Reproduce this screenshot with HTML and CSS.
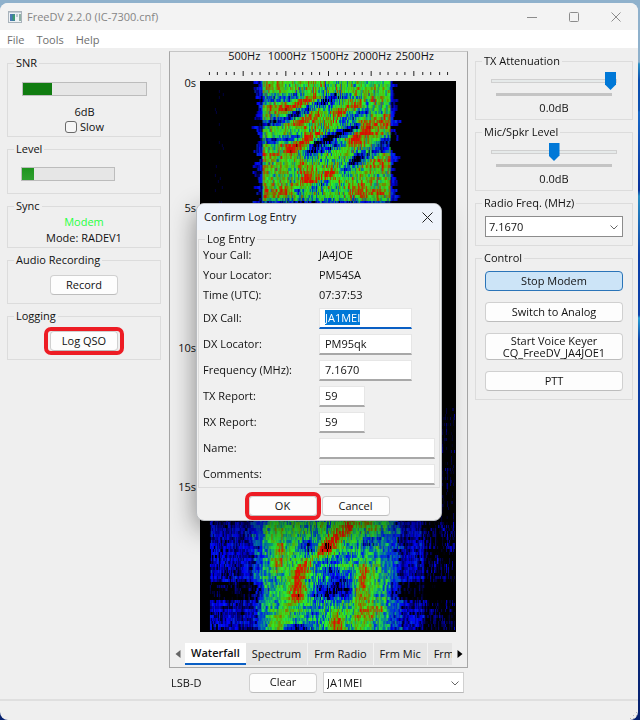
FILE: index.html
```html
<!DOCTYPE html>
<html lang="en">
<head>
<meta charset="utf-8">
<title>FreeDV 2.2.0 (IC-7300.cnf)</title>
<link rel="stylesheet" href="styles.css">
</head>
<body>
<div class="window">
  <header class="titlebar">
    <svg class="app-icon" width="14" height="12" viewBox="0 0 14 12" aria-hidden="true">
      <rect x="0.5" y="0.5" width="13" height="11" fill="#eef2f5" stroke="#a9b3bb"/>
      <rect x="1" y="1" width="12" height="1" fill="#c3ccd6"/>
      <rect x="2" y="3" width="5" height="7" fill="#3f8396"/>
      <rect x="2" y="3" width="2" height="7" fill="#4c78b4"/>
      <rect x="5" y="4" width="2" height="5" fill="#3d9a72"/>
      <rect x="8" y="3" width="2" height="3" fill="#b9c6cf"/>
      <rect x="11" y="3" width="2" height="7" fill="#8fb0a5"/>
    </svg>
    <h1 class="title">FreeDV 2.2.0 (IC-7300.cnf)</h1>
    <div class="caption-buttons">
      <button aria-label="Minimize"><svg width="10" height="10" viewBox="0 0 10 10"><path d="M0 5.5h10" stroke="#8c8c8c"/></svg></button>
      <button aria-label="Maximize"><svg width="10" height="10" viewBox="0 0 10 10"><rect x="0.5" y="0.5" width="9" height="9" rx="1" fill="none" stroke="#8c8c8c"/></svg></button>
      <button aria-label="Close"><svg width="10" height="10" viewBox="0 0 10 10"><path d="M0.5 0.5l9 9M9.5 0.5l-9 9" stroke="#8c8c8c"/></svg></button>
    </div>
  </header>
  <nav class="menubar"><a href="#">File</a><a href="#">Tools</a><a href="#">Help</a></nav>

  <main class="content">
    <section class="side left">
      <fieldset>
        <legend>SNR</legend>
        <div class="snr">
          <div class="meter"><div class="meter-fill" style="width:23.5%"></div></div>
          <div class="line">6dB</div>
          <label class="line check"><input type="checkbox">Slow</label>
        </div>
      </fieldset>
      <fieldset>
        <legend>Level</legend>
        <div class="level">
          <div class="meter short"><div class="meter-fill bright" style="width:13%"></div></div>
        </div>
      </fieldset>
      <fieldset>
        <legend>Sync</legend>
        <div class="sync">
          <div class="line synced">Modem</div>
          <div class="line">Mode: RADEV1</div>
        </div>
      </fieldset>
      <fieldset>
        <legend>Audio Recording</legend>
        <div class="action"><button class="btn">Record</button></div>
      </fieldset>
      <fieldset>
        <legend>Logging</legend>
        <div class="action"><span class="marked"><button class="btn">Log QSO</button></span></div>
      </fieldset>
    </section>

    <section class="center">
      <div class="panel">
        <div class="freq-labels"><span>500Hz</span><span>1000Hz</span><span>1500Hz</span><span>2000Hz</span><span>2500Hz</span></div>
        <svg class="ticks" viewBox="0 0 258 6" preserveAspectRatio="none" aria-hidden="true"></svg>
        <div class="plot">
          <div class="times"><span>0s</span><span>5s</span><span>10s</span><span>15s</span></div>
          <canvas class="waterfall" width="258" height="551"></canvas>
        </div>
        <div class="tabs">
          <button class="arrow" aria-label="Previous tabs"><svg width="6" height="8" viewBox="0 0 6 8"><path d="M5.5 0v8L0.5 4z" fill="#666"/></svg></button>
          <div class="tab-strip">
            <button class="tab active">Waterfall</button><button class="tab">Spectrum</button><button class="tab">Frm Radio</button><button class="tab">Frm Mic</button><button class="tab">Frm Decoder</button>
          </div>
          <button class="arrow" aria-label="Next tabs"><svg width="6" height="8" viewBox="0 0 6 8"><path d="M0.5 0v8L5.5 4z" fill="#000"/></svg></button>
        </div>
      </div>
      <div class="bottom-row">
        <span class="mode">LSB-D</span>
        <button class="btn">Clear</button>
        <span class="combo soft"><select aria-label="Heard station"><option>JA1MEI</option></select>
          <svg width="8" height="5" viewBox="0 0 8 5"><path d="M0.5 0.5L4 4L7.5 0.5" fill="none" stroke="#666"/></svg></span>
      </div>
    </section>

    <section class="side right">
      <fieldset>
        <legend>TX Attenuation</legend>
        <div class="slider">
          <input type="range" min="0" max="100" value="100" aria-label="TX Attenuation">
          <div class="scale"></div>
          <div class="line">0.0dB</div>
        </div>
      </fieldset>
      <fieldset>
        <legend>Mic/Spkr Level</legend>
        <div class="slider">
          <input type="range" min="0" max="100" value="50" aria-label="Mic/Spkr Level">
          <div class="scale"></div>
          <div class="line">0.0dB</div>
        </div>
      </fieldset>
      <fieldset>
        <legend>Radio Freq. (MHz)</legend>
        <div class="radio-freq">
          <span class="combo"><select aria-label="Radio frequency"><option>7.1670</option></select>
            <svg width="8" height="5" viewBox="0 0 8 5"><path d="M0.5 0.5L4 4L7.5 0.5" fill="none" stroke="#666"/></svg></span>
        </div>
      </fieldset>
      <fieldset>
        <legend>Control</legend>
        <div class="control">
          <button class="btn pressed">Stop Modem</button>
          <button class="btn">Switch to Analog</button>
          <button class="btn two-line">Start Voice Keyer<br>CQ_FreeDV_JA4JOE1</button>
          <button class="btn">PTT</button>
        </div>
      </fieldset>
    </section>
  </main>
  <footer class="statusbar">
    <svg width="10" height="10" viewBox="0 0 10 10" aria-hidden="true"><path d="M8 2h1v1h-1zM5 5h1v1h-1zM8 5h1v1h-1zM2 8h1v1h-1zM5 8h1v1h-1zM8 8h1v1h-1z" fill="#b4b4b4"/></svg>
  </footer>
</div>

<form class="dialog" role="dialog" aria-labelledby="dialog-title">
  <header class="dialog-title">
    <h2 id="dialog-title">Confirm Log Entry</h2>
    <button type="button" aria-label="Close"><svg width="11" height="11" viewBox="0 0 11 11"><path d="M0.5 0.5l10 10M10.5 0.5l-10 10" stroke="#222"/></svg></button>
  </header>
  <fieldset>
    <legend>Log Entry</legend>
    <div class="fields">
      <span>Your Call:</span><span>JA4JOE</span>
      <span>Your Locator:</span><span>PM54SA</span>
      <span>Time (UTC):</span><span>07:37:53</span>
      <label for="dx-call">DX Call:</label><input class="medium" id="dx-call" value="JA1MEI">
      <label for="dx-loc">DX Locator:</label><input class="medium" id="dx-loc" value="PM95qk">
      <label for="freq">Frequency (MHz):</label><input class="medium" id="freq" value="7.1670">
      <label for="tx">TX Report:</label><input class="small" id="tx" value="59">
      <label for="rx">RX Report:</label><input class="small" id="rx" value="59">
      <label for="name">Name:</label><input id="name">
      <label for="comments">Comments:</label><input id="comments">
    </div>
  </fieldset>
  <div class="dialog-actions">
    <span class="marked"><button type="button" class="btn">OK</button></span>
    <button type="button" class="btn">Cancel</button>
  </div>
</form>
<script src="waterfall.js"></script>
</body>
</html>
```
FILE: styles.css
```css
* { box-sizing: border-box; }

body {
  margin: 0;
  min-height: 100vh;
  padding: 3px 2px 0 0;
  display: flex;
  position: relative;
  background: linear-gradient(#8fb1cc 0 62px, #2b8fc4 64px, #0a4fb0 80px 110px, #1667c8 112px, #06309a 190px, #2b8fc4 196px, #0b3fa8 255px 315px, #2b9fd4 318px, #0a3fa8 340px, #06216f);
  font: 11px/16px "Open Sans", "Noto Sans", sans-serif;
  color: #111;
}

button, input, select { font: inherit; color: inherit; margin: 0; }
button { padding: 0; border: 0; background: none; }
svg { display: block; }

.window {
  flex: 1;
  min-width: 0;
  display: flex;
  flex-direction: column;
  background: #efefef;
  border-radius: 8px;
  overflow: hidden;
}

.titlebar {
  display: flex;
  align-items: center;
  height: 27px;
  padding: 0 17px 0 8px;
  background: #f3f3f3;
  color: #858585;
}
.title { margin: 0 0 0 5px; font-size: 11px; font-weight: 400; }
.caption-buttons { display: flex; gap: 32px; margin-left: auto; }

.menubar {
  display: flex;
  gap: 12px;
  height: 18px;
  padding: 0 7px;
  background: #fff;
  line-height: 20px;
}
.menubar a { color: #6e6e6e; text-decoration: none; }

.content {
  flex: 1;
  display: grid;
  grid-template-columns: 154px minmax(0, 1fr) 158px;
  column-gap: 7px;
  padding: 0 5px 0 7px;
}

.side { display: flex; flex-direction: column; gap: 4px; }
.left { padding-top: 7px; }
.right { padding-top: 5px; }

fieldset {
  min-width: 0;
  margin: 0;
  padding: 0;
  border: 1px solid #dcdcdc;
}
legend { margin-left: 6px; padding: 0 2px; line-height: 16px; }
.line { text-align: center; line-height: 16px; }

.snr { padding: 11px 13px 1px 14px; }
.level { padding: 10px 13px 12px; }
.sync { padding-bottom: 1px; }
.action { padding: 7px 0 8px; }
.action > * { margin: 0 auto; }
.synced { color: #1fff3f; }

.meter { height: 14px; border: 1px solid #bcbcbc; background: #e6e6e6; }
.meter.short { width: 94px; }
.snr .meter { margin-bottom: 8px; }
.meter-fill { height: 100%; background: #107c10; }
.meter-fill.bright { background: linear-gradient(#1e941e, #2fa02f); }

.check { display: flex; justify-content: center; align-items: center; gap: 3px; margin-top: -1px; }
.check input {
  appearance: none;
  width: 12px;
  height: 12px;
  border: 1px solid #6a6a6a;
  border-radius: 3px;
  background: #f6f6f6;
}

.btn {
  display: block;
  width: 68px;
  height: 20px;
  padding-bottom: 1px;
  border: 1px solid #d0d0d0;
  border-bottom-color: #bdbdbd;
  border-radius: 4px;
  background: #fdfdfd;
  line-height: 16px;
}

.marked { position: relative; display: block; width: 68px; }
.marked::after {
  content: "";
  position: absolute;
  inset: -4px -6px;
  border: 4px solid #ed1c24;
  border-radius: 7px;
  pointer-events: none;
}

.center { display: flex; flex-direction: column; padding: 3px 0 0 1px; min-width: 0; }
.panel { border: 1px solid #a6a6a6; border-top-color: #c6c6c6; }
.freq-labels {
  display: grid;
  grid-template-columns: repeat(5, 1fr);
  margin: -5px 31px 0 53px;
  text-align: center;
  line-height: 17px;
}
.freq-labels span { display: flex; justify-content: center; }
.ticks { display: block; margin: 6px 0 5px 30px; width: calc(100% - 41px); height: 6px; }
.plot { display: grid; grid-template-columns: 26px minmax(0, 1fr); column-gap: 4px; padding-right: 11px; }
.times {
  display: grid;
  grid-template-rows: 125px 140px 139px 1fr;
  margin-top: -6px;
  text-align: right;
}
.waterfall { display: block; width: 100%; height: 551px; background: #000; }

.tabs { display: flex; margin-top: 11px; padding-bottom: 2px; }
.arrow { width: 15px; display: grid; place-items: center; }
.tab-strip { flex: 1; min-width: 0; display: flex; overflow: hidden; }
.tab {
  flex: none;
  height: 22px;
  padding: 0 6px;
  background: #e5e5e5;
  border-right: 1px solid #f3f3f3;
}
.tab.active { background: #fff; border-right: 0; border-bottom: 2px solid #0a5fc4; font-weight: 600; line-height: 18px; }

.bottom-row { display: flex; align-items: center; padding: 4px 4px 5px 0; }
.mode { width: 80px; padding-left: 2px; }
.combo { position: relative; display: block; }
.combo svg { position: absolute; right: 5px; top: 9px; pointer-events: none; }
.combo select {
  display: block;
  appearance: none;
  width: 100%;
  height: 21px;
  padding: 0 3px;
  border: 1px solid #8c8c8c;
  border-radius: 0;
  background: #fff;
}
.combo.soft { flex: 1; margin-left: 6px; }
.combo.soft select { border-color: #d0d0d0; border-bottom-color: #b8b8b8; }

.slider { padding: 3px 15px; }
.slider input {
  appearance: none;
  display: block;
  width: 100%;
  height: 18px;
  background: none;
}
.slider input::-webkit-slider-runnable-track { height: 4px; border: 1px solid #d0d0d0; background: #e6eaea; }
.slider input::-webkit-slider-thumb {
  appearance: none;
  width: 11px;
  height: 18px;
  margin-top: -8px;
  background: #0078d7;
  clip-path: polygon(0 0, 100% 0, 100% 70%, 50% 100%, 0 70%);
}
.scale { height: 3px; margin: 3px 5px 4px; background: #c4c4c4; }

.radio-freq { padding: 5px 9px 8px; }
.control { display: flex; flex-direction: column; gap: 11px; padding: 5px 9px 8px; }
.control .btn { width: 100%; }
.control .two-line { height: 27px; padding: 0; line-height: 12px; }
.control .pressed { border-color: #2a74b8; background: #cce4f7; }

.statusbar { height: 21px; border-top: 2px solid #dfdfdf; display: flex; justify-content: flex-end; align-items: flex-end; }

.dialog {
  position: absolute;
  left: 196px;
  top: 203px;
  width: 246px;
  border: 1px solid #b9bcc0;
  border-radius: 8px;
  background: #f0f0f0;
  box-shadow: 0 8px 26px rgba(0, 0, 0, .45);
}
.dialog-title {
  display: flex;
  justify-content: space-between;
  align-items: center;
  height: 26px;
  padding: 0 8px 0 7px;
  border-radius: 7px 7px 0 0;
  background: #eef3fa;
}
.dialog-title h2 { margin: 0; font-size: 11px; font-weight: 400; }
.dialog fieldset { margin: 1px 1px 0; }
.dialog legend { margin-left: 6px; }
.fields {
  display: grid;
  grid-template-columns: 116px 1fr;
  grid-template-rows: repeat(3, 20px) repeat(7, 26px);
  align-items: center;
  padding: 0 4px;
  margin-top: -2px;
}
.fields input {
  width: 100%;
  height: 21px;
  padding: 0 5px;
  border: 1px solid #e6e6e6;
  border-bottom: 2px solid #a8a8a8;
  background: #fff;
  outline: 0;
}
.fields .medium { width: 93px; }
.fields .small { width: 46px; }
#dx-call { border-bottom-color: #0a5fc4; }
.fields ::selection { background: #0078d7; color: #fff; }
.dialog-actions { display: flex; justify-content: center; gap: 5px; padding: 8px 0 4px; }
.dialog-actions .marked::after { inset: -4px; }
```
FILE: waterfall.js
```js
const svg = document.querySelector(".ticks");
for (let i = 1; i <= 29; i++) {
  const major = i % 5 === 0;
  const r = document.createElementNS("http://www.w3.org/2000/svg", "rect");
  r.setAttribute("x", Math.round(i * 8.6));
  r.setAttribute("y", major ? 1 : 2);
  r.setAttribute("width", 1);
  r.setAttribute("height", major ? 5 : 3);
  r.setAttribute("fill", "#222");
  svg.appendChild(r);
}

// Signal ridges and fades: [x1, y1, x2, y2, radius, gain]
const features = [
  [65,17,98,15,4,-.3],[95,31,135,15,4,-.32],[135,15,160,15,3,-.28],[65,43,98,32,4,-.34],[65,59,98,55,3,-.34],
  [115,62,158,44,4,-.55],[105,72,145,62,4,-.3],[145,37,165,29,4,-.3],[155,77,192,64,4,-.35],[145,87,162,76,4,-.25],
  [98,109,128,99,4,-.3],[65,119,190,119,2,-.35],[120,22,150,24,4,-.12],[180,62,195,55,5,-.3],
  [88,27,115,16,5,.24],[138,30,158,19,5,.24],[65,27,82,25,6,.16],[65,4,80,6,6,.14],[98,40,118,33,5,.18],
  [92,67,118,51,5,.25],[145,67,165,47,6,.22],[165,50,190,38,9,.14],[178,80,190,76,9,.14],[107,87,107,96,8,.16],
  [105,105,132,91,5,.2],[70,114,85,110,5,.18],[155,108,185,112,7,.16],[65,75,90,70,6,.1],
  [152,440,128,464,8,.28],[128,464,102,484,5,.28],[168,440,174,448,8,.16],[98,492,98,513,8,.3],[78,455,78,480,7,.16],
  [165,490,162,520,8,.26],[178,527,160,536,6,.24],[138,535,138,548,7,.26],[96,515,75,548,8,.14],
  [108,464,112,470,8,-.24],[168,460,178,455,7,-.22],[120,510,146,508,9,-.34],[130,488,140,496,8,-.2],[90,546,106,546,5,-.3],
  [112,530,125,535,7,-.1],[118,480,150,474,5,-.1]
];
const stops = [[0,0,0,0],[.12,0,0,0],[.28,0,0,255],[.45,0,110,170],[.58,40,245,45],[.74,100,160,0],[.88,225,15,0],[1.1,200,20,0],[1.16,0,0,0]];

let seed = 7300;
const rnd = () => (seed = (seed * 1664525 + 1013904223) >>> 0) / 4294967296;

function segmentDistance(x, y, f) {
  const dx = f[2] - f[0], dy = f[3] - f[1];
  const t = Math.max(0, Math.min(1, ((x - f[0]) * dx + (y - f[1]) * dy) / (dx * dx + dy * dy || 1)));
  return Math.hypot(x - f[0] - t * dx, y - f[1] - t * dy);
}
function color(v) {
  for (let i = 1; i < stops.length; i++) {
    if (v <= stops[i][0]) {
      const a = stops[i - 1], b = stops[i], t = Math.max(0, (v - a[0]) / (b[0] - a[0]));
      return [1, 2, 3].map(k => a[k] + (b[k] - a[k]) * t);
    }
  }
  return [0, 0, 0];
}

const ctx = document.querySelector(".waterfall").getContext("2d");
let held = new Array(258).fill(0);
for (let y = 0; y < 547; y += 3) {
  const late = y > 325;
  const edge = (rnd() + rnd() - 1) * 6;
  const quiet = y > 500 && y < 519;
  const row = (rnd() - .5) * .06;
  let patch = 0;
  for (let x = 0; x < 257; x++) {
    // Each column partly keeps its level from the row above
    const fresh = (rnd() + rnd()) - 1;
    held[x] = rnd() < .4 ? held[x] : fresh;
    if (x % 7 === 0) patch = (rnd() - .5) * .14;
    const n = held[x];
    let v = 0;
    if (x > 62 && x < 192) {
      v = (late ? .54 : .62) + n * (late ? .22 : .27) + patch + row;
      if (late) v -= .1 * Math.max(0, 1 - Math.min(x - 62, 192 - x) / 14);
    } else if (late && x > 54 + edge && x < 200 + edge) {
      v = .38 + n * .2;
    } else if (late && x > 9) {
      v = (x > 225 ? .12 : .23) + n * .15 + row + patch / 2;
      if (y < 440) v -= .05;
    } else if (!late && x > 57 + edge && x < 197 + edge) {
      v = .24 + n * .14;
    } else if (!late && x > 14 && x < 24) {
      v = rnd() > .97 ? .16 : 0;
    }
    if (quiet && (x < 62 || x > 192)) v -= .14;
    if (x > 58 && x < 198) {
      for (const f of features) {
        const d = segmentDistance(x, y, f) / f[4];
        if (d < 2.5) v += f[5] * Math.exp(-d * d);
      }
    }
    ctx.fillStyle = "rgb(" + color(v).map(Math.round).join() + ")";
    ctx.fillRect(x, y, 1, 3);
  }
}

const dxCall = document.getElementById("dx-call");
dxCall.focus();
dxCall.select();
```
